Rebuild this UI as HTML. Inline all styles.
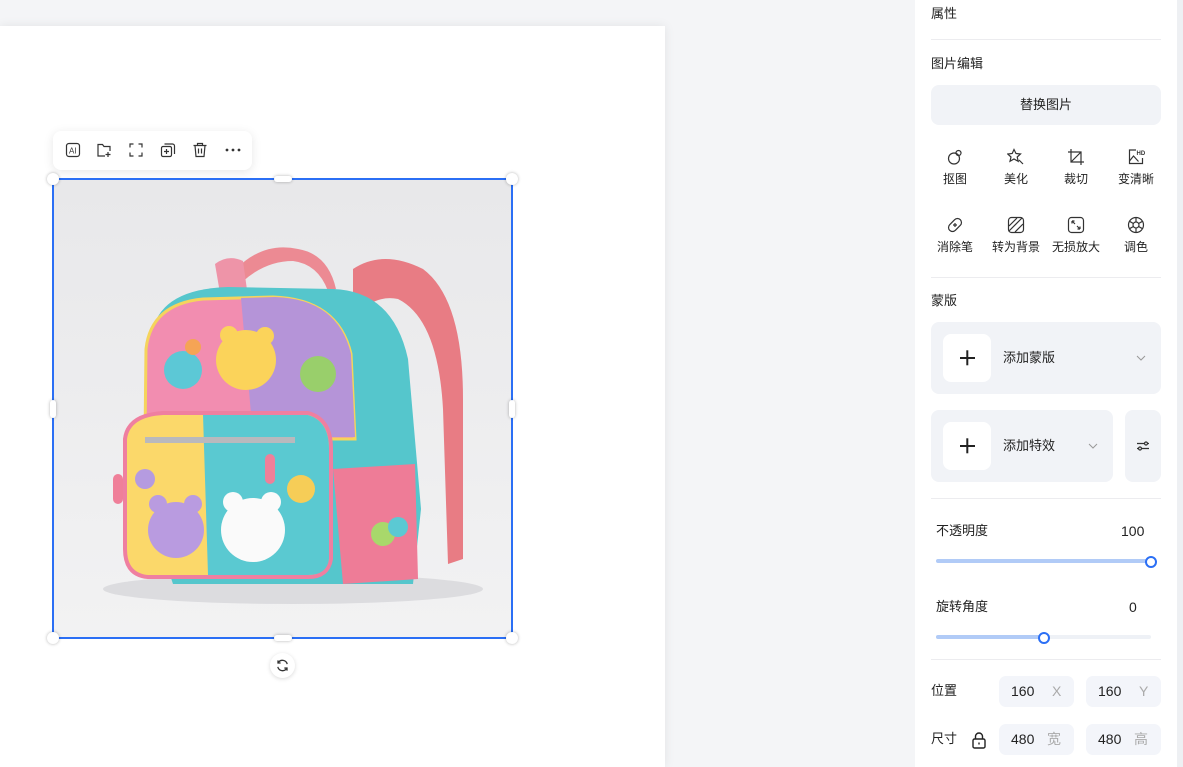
<!DOCTYPE html>
<html><head><meta charset="utf-8"><style>
*{box-sizing:border-box;margin:0;padding:0}
html,body{width:1183px;height:767px;overflow:hidden}
body{background:#f4f5f7;position:relative;font-family:"Liberation Sans","Noto Sans CJK SC",sans-serif;color:#222;font-size:13px}
.a{position:absolute}
.board{left:0;top:26px;width:665px;height:741px;background:#fff;box-shadow:0 0 10px rgba(0,0,0,.08)}
.tb{left:53px;top:131px;width:199px;height:39px;background:#fff;border-radius:8px;box-shadow:0 2px 10px rgba(0,0,0,.1)}
.tb svg{position:absolute;top:11px}
.sel{left:52px;top:178px;width:461px;height:461px;border:2px solid #2b6ff5}
.h{position:absolute;background:#fff;box-shadow:0 0 3px rgba(0,0,0,.3)}
.panel{left:915px;top:0;width:262px;height:767px;background:#fff}
.sb{left:1177px;top:0;width:6px;height:767px;background:#eef0f3}
.t{position:absolute;font-size:13px;color:#222;line-height:16px}
.line{position:absolute;left:16px;width:230px;height:1px;background:#ececef}
.btn{position:absolute;background:#f1f3f7;border-radius:8px}
.ic{position:absolute;width:60px;text-align:center;font-size:12px;line-height:14px}
.ic svg{display:block;margin:0 auto 6px}
.plus{position:absolute;left:12px;top:12px;width:48px;height:48px;background:#fff;border-radius:8px}
.plus:before,.plus:after{content:"";position:absolute;left:17px;top:23px;width:15px;height:1.6px;background:#222}
.plus:after{transform:rotate(90deg)}
.in{position:absolute;width:75px;height:31px;background:#f3f5fa;border-radius:7px;font-size:14px}
.in span{position:absolute;top:7px;line-height:16px}
.chev{position:absolute}
</style></head><body>
<div class="a board"></div>
<div class="a tb">
<svg style="left:12px" width="16" height="16" viewBox="0 0 16 16" fill="none" stroke="#333" stroke-width="1.2"><rect x="1.5" y="1.5" width="13" height="13" rx="2.5"/><text x="4" y="11.5" font-size="8" fill="#333" stroke="none" font-family="Liberation Sans">AI</text></svg>
<svg style="left:43px" width="16" height="16" viewBox="0 0 16 16" fill="none" stroke="#333" stroke-width="1.2"><path d="M9 14H2V2.5h4.5l1.5 2h6V9"/><path d="M12 10v5M9.5 12.5h5"/></svg>
<svg style="left:75px" width="16" height="16" viewBox="0 0 16 16" fill="none" stroke="#333" stroke-width="1.2"><path d="M2 5.5V2h3.5M10.5 2H14v3.5M14 10.5V14h-3.5M5.5 14H2v-3.5"/></svg>
<svg style="left:107px" width="16" height="16" viewBox="0 0 16 16" fill="none" stroke="#333" stroke-width="1.2"><rect x="1.5" y="4.5" width="10" height="10" rx="1.5"/><path d="M4.5 2h8a2 2 0 0 1 2 2v8M6.5 7v5M4 9.5h5"/></svg>
<svg style="left:139px" width="16" height="16" viewBox="0 0 16 16" fill="none" stroke="#333" stroke-width="1.2"><path d="M1.5 3.5h13M5.5 3.5V1.5h5v2M3 3.5l1 11h8l1-11M6.5 6.5v5M9.5 6.5v5"/></svg>
<svg style="left:171px" width="18" height="16" viewBox="0 0 18 16" fill="#333"><circle cx="3" cy="8" r="1.4"/><circle cx="9" cy="8" r="1.4"/><circle cx="15" cy="8" r="1.4"/></svg>
</div>
<svg class="a" style="left:53px;top:179px" width="459" height="459" viewBox="0 0 459 459">
<defs><linearGradient id="bg" x1="0" y1="0" x2="0" y2="1"><stop offset="0" stop-color="#e8e8ea"/><stop offset="1" stop-color="#f2f2f3"/></linearGradient></defs>
<rect width="459" height="459" fill="url(#bg)"/>
<ellipse cx="240" cy="410" rx="190" ry="15" fill="#dcdcdf"/>
<path d="M300 90 Q330 70 370 90 Q410 120 410 220 L410 380 L395 385 L390 230 Q385 140 345 120 Q320 115 300 140Z" fill="#e87c84"/>
<path d="M167 110 Q200 60 245 70 Q275 75 283 110 L275 112 Q265 85 240 82 Q205 82 178 115Z" fill="#ec8a93"/>
<path d="M162 85 Q175 75 190 82 L195 118 L168 120Z" fill="#ee94a8"/>
<path d="M100 150 Q110 110 175 108 L280 110 Q340 112 355 180 L368 330 L360 405 L120 405 L95 330Z" fill="#55c6cc"/>
<path d="M280 290 L362 285 L365 400 L290 405Z" fill="#ee7c97"/>
<path d="M92 260 L93 170 Q98 125 150 120 L220 118 Q285 120 298 175 L302 260Z" fill="#f28db0" stroke="#f5d45c" stroke-width="3"/>
<path d="M188 119 L222 118 Q285 120 298 175 L302 258 L200 258Z" fill="#b594d8"/>
<circle cx="193" cy="181" r="30" fill="#fbd35a"/>
<circle cx="176" cy="156" r="9" fill="#fbd35a"/><circle cx="212" cy="157" r="9" fill="#fbd35a"/>
<circle cx="130" cy="191" r="19" fill="#5cc8d6"/>
<circle cx="140" cy="168" r="8" fill="#f5a455"/>
<circle cx="265" cy="195" r="18" fill="#99cf6b"/>
<path d="M72 260 Q75 236 110 234 L255 234 Q278 240 278 270 L278 380 Q275 398 255 398 L95 398 Q72 396 72 370Z" fill="#fbd86a" stroke="#ef7fa0" stroke-width="4"/>
<path d="M150 236 L255 236 Q276 242 276 270 L276 380 Q274 396 255 396 L155 396Z" fill="#5ac9d1"/>
<rect x="92" y="258" width="150" height="6" fill="#b9b9bd"/>
<circle cx="123" cy="351" r="28" fill="#b99be0"/>
<circle cx="105" cy="325" r="9" fill="#b99be0"/><circle cx="140" cy="325" r="9" fill="#b99be0"/>
<circle cx="200" cy="351" r="32" fill="#fafafa"/>
<circle cx="180" cy="323" r="10" fill="#fafafa"/><circle cx="218" cy="323" r="10" fill="#fafafa"/>
<circle cx="248" cy="310" r="14" fill="#f6cd57"/><circle cx="92" cy="300" r="10" fill="#b59be0"/>
<circle cx="330" cy="355" r="12" fill="#a8d86b"/><circle cx="345" cy="348" r="10" fill="#5bc9d3"/>
<rect x="60" y="295" width="10" height="30" rx="5" fill="#ef7f99"/>
<rect x="212" y="275" width="10" height="30" rx="5" fill="#ef7f99"/>
</svg>
<div class="a sel">
<div class="h" style="left:-7px;top:-7px;width:12px;height:12px;border-radius:50%"></div>
<div class="h" style="right:-7px;top:-7px;width:12px;height:12px;border-radius:50%"></div>
<div class="h" style="left:-7px;bottom:-7px;width:12px;height:12px;border-radius:50%"></div>
<div class="h" style="right:-7px;bottom:-7px;width:12px;height:12px;border-radius:50%"></div>
<div class="h" style="left:220px;top:-4px;width:18px;height:6px;border-radius:3px"></div>
<div class="h" style="left:220px;bottom:-4px;width:18px;height:6px;border-radius:3px"></div>
<div class="h" style="left:-4px;top:220px;width:6px;height:18px;border-radius:3px"></div>
<div class="h" style="right:-4px;top:220px;width:6px;height:18px;border-radius:3px"></div>
</div>
<div class="a" style="left:270px;top:653px;width:25px;height:25px;border-radius:50%;background:#fff;box-shadow:0 1px 4px rgba(0,0,0,.15)">
<svg style="position:absolute;left:5px;top:5px" width="15" height="15" viewBox="0 0 16 16" fill="none" stroke="#333" stroke-width="1.4"><path d="M13 6.5A5.2 5.2 0 0 0 3.5 5M3 9.5A5.2 5.2 0 0 0 12.5 11"/><path d="M3.2 2.5v2.8H6M12.8 13.5v-2.8H10"/></svg></div>

<div class="a panel">
<div class="t" style="left:16px;top:6px">属性</div>
<div class="line" style="top:39px"></div>
<div class="t" style="left:16px;top:56px">图片编辑</div>
<div class="btn" style="left:16px;top:85px;width:230px;height:40px;text-align:center;line-height:40px">替换图片</div>
<div class="ic" style="left:10px;top:148px"><svg width="18" height="18" viewBox="0 0 18 18" fill="none" stroke="#333" stroke-width="1.2"><circle cx="8" cy="10.5" r="5.5"/><circle cx="12.5" cy="5" r="2.5"/></svg>抠图</div>
<div class="ic" style="left:71px;top:148px"><svg width="18" height="18" viewBox="0 0 18 18" fill="none" stroke="#333" stroke-width="1.2"><path d="M7 1.5l2 4 4.5.5-3.3 3 1 4.3L7 11l-4 2.3 1-4.3-3.3-3 4.5-.5z"/><path d="M12 12l4 4"/></svg>美化</div>
<div class="ic" style="left:131px;top:148px"><svg width="18" height="18" viewBox="0 0 18 18" fill="none" stroke="#333" stroke-width="1.2"><path d="M4 1v13h13M1 4h13v13M4 14L14 4"/></svg>裁切</div>
<div class="ic" style="left:191px;top:148px"><svg width="18" height="18" viewBox="0 0 18 18" fill="none" stroke="#333" stroke-width="1.2"><path d="M9 2H2.5v13.5h13V10"/><path d="M2.5 13l4-5 5 5.5"/><text x="9.5" y="7" font-size="6" font-weight="bold" fill="#333" stroke="none" font-family="Liberation Sans">HD</text></svg>变清晰</div>
<div class="ic" style="left:10px;top:216px"><svg width="18" height="18" viewBox="0 0 18 18" fill="none" stroke="#333" stroke-width="1.2"><rect x="1.5" y="5" width="15" height="8" rx="4" transform="rotate(-45 9 9)"/><path d="M7 9h4M9 7v4"/></svg>消除笔</div>
<div class="ic" style="left:71px;top:216px"><svg width="18" height="18" viewBox="0 0 18 18" fill="none" stroke="#333" stroke-width="1.2"><rect x="1.5" y="1.5" width="15" height="15" rx="3"/><path d="M2 10L10 2M2 15L15 2M8 16L16 8"/></svg>转为背景</div>
<div class="ic" style="left:131px;top:216px"><svg width="18" height="18" viewBox="0 0 18 18" fill="none" stroke="#333" stroke-width="1.2"><rect x="1.5" y="1.5" width="15" height="15" rx="3"/><path d="M5 5l3 3M5 5h2.5M5 5v2.5M13 13l-3-3M13 13h-2.5M13 13v-2.5"/></svg>无损放大</div>
<div class="ic" style="left:191px;top:216px"><svg width="18" height="18" viewBox="0 0 18 18" fill="none" stroke="#333" stroke-width="1.2"><circle cx="9" cy="9" r="7.5"/><circle cx="9" cy="9" r="3"/><path d="M9 1.5v4.5M9 12v4.5M2.5 5.3L6.4 7.5M11.6 10.5l3.9 2.2M2.5 12.7l3.9-2.2M11.6 7.5l3.9-2.2"/></svg>调色</div>
<div class="line" style="top:277px"></div>
<div class="t" style="left:16px;top:293px">蒙版</div>
<div class="btn" style="left:16px;top:322px;width:230px;height:72px"><div class="plus"></div><div class="t" style="left:72px;top:28px">添加蒙版</div><svg class="chev" style="left:205px;top:33px" width="10" height="6" viewBox="0 0 10 6" fill="none" stroke="#999" stroke-width="1"><path d="M1 1l4 4 4-4"/></svg></div>
<div class="btn" style="left:16px;top:410px;width:182px;height:72px"><div class="plus"></div><div class="t" style="left:72px;top:28px">添加特效</div><svg class="chev" style="left:157px;top:33px" width="10" height="6" viewBox="0 0 10 6" fill="none" stroke="#999" stroke-width="1"><path d="M1 1l4 4 4-4"/></svg></div>
<div class="btn" style="left:210px;top:410px;width:36px;height:72px"><svg style="position:absolute;left:11px;top:30px" width="14" height="12" viewBox="0 0 14 12" fill="none" stroke="#333" stroke-width="1.2"><path d="M1 3.5h7M12 3.5h1M1 8.5h1M6 8.5h7"/><circle cx="10" cy="3.5" r="1.5"/><circle cx="4" cy="8.5" r="1.5"/></svg></div>
<div class="line" style="top:498px"></div>
<div class="t" style="left:21px;top:523px">不透明度</div>
<div class="t" style="left:206px;top:523px;font-size:14px">100</div>
<div class="a" style="left:21px;top:559px;width:215px;height:4px;border-radius:2px;background:#b1cbf7"></div>
<div class="a" style="left:230px;top:556px;width:12px;height:12px;border-radius:50%;background:#fff;border:2px solid #2b6ff5"></div>
<div class="t" style="left:21px;top:599px">旋转角度</div>
<div class="t" style="left:214px;top:599px;font-size:14px">0</div>
<div class="a" style="left:21px;top:635px;width:215px;height:4px;border-radius:2px;background:#eef1f6"></div>
<div class="a" style="left:21px;top:635px;width:108px;height:4px;border-radius:2px;background:#b1cbf7"></div>
<div class="a" style="left:123px;top:632px;width:12px;height:12px;border-radius:50%;background:#fff;border:2px solid #2b6ff5"></div>
<div class="line" style="top:659px"></div>
<div class="t" style="left:16px;top:683px">位置</div>
<div class="in" style="left:84px;top:676px"><span style="left:12px">160</span><span style="left:53px;color:#aaa">X</span></div>
<div class="in" style="left:171px;top:676px"><span style="left:12px">160</span><span style="left:53px;color:#aaa">Y</span></div>
<div class="t" style="left:16px;top:731px">尺寸</div>
<svg class="a" style="left:56px;top:732px" width="16" height="17" viewBox="0 0 16 17" fill="none" stroke="#222" stroke-width="1.4"><rect x="2" y="7" width="12" height="9" rx="1.5"/><path d="M4.5 7V4.5a3.5 3.5 0 0 1 7 0V7"/><path d="M8 10.5v2"/></svg>
<div class="in" style="left:84px;top:724px"><span style="left:12px">480</span><span style="left:48px;color:#aaa">宽</span></div>
<div class="in" style="left:171px;top:724px"><span style="left:12px">480</span><span style="left:48px;color:#aaa">高</span></div>
</div>
<div class="a sb"></div>
</body></html>
